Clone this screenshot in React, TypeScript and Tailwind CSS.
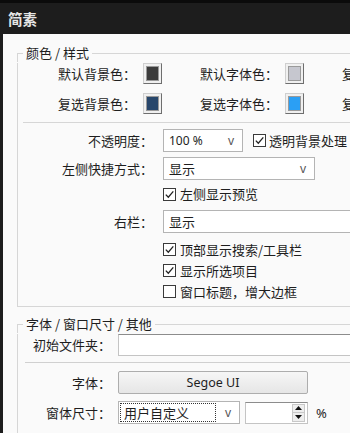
import React from 'react'

const CJK = "font-['Noto_Sans_CJK_SC',sans-serif]"
const LATIN = "font-['Noto_Sans','Open_Sans',sans-serif]"

// Group box that runs off the right edge of the window (no right border visible)
function Group({ title, className = '', bodyClass = '', children }: { title: string; className?: string; bodyClass?: string; children: React.ReactNode }) {
  return (
    <div className={`ml-[14px] w-[400px] min-w-[400px] ${className}`}>
      <div className="flex h-[18px]">
        <div className="h-[9px] w-[6px] self-end border-t border-l border-[#d6d6d6]" />
        <span className="px-[3px] whitespace-nowrap">{title}</span>
        <div className="h-[9px] flex-1 self-end border-t border-[#d6d6d6]" />
      </div>
      <div className={`border-l border-b border-[#d6d6d6] ${bodyClass}`}>{children}</div>
    </div>
  )
}

function Swatch({ color }: { color: string }) {
  return (
    <div className="ml-[7px] h-[21px] w-[19px] shrink-0 border border-[#cfcfcf] border-r-[#6e6e6e] border-b-[#6e6e6e] bg-[#f0f0f0] p-[2px]">
      <div className="h-full w-full border border-[#9a9a9a]" style={{ background: color }} />
    </div>
  )
}

function Check({ checked }: { checked: boolean }) {
  return (
    <div className="flex h-[13px] w-[13px] shrink-0 items-center justify-center border border-[#3a3a3a] bg-white">
      {checked && (
        <svg width="11" height="11" viewBox="0 0 11 11">
          <path d="M1.8 5.6 L4.3 8.2 L9.3 2.4" fill="none" stroke="#222" strokeWidth="1.3" />
        </svg>
      )}
    </div>
  )
}

function CheckRow({ label, checked, h = 'h-[21px]' }: { label: string; checked: boolean; h?: string }) {
  return (
    <div className={`flex ${h} items-center pl-[145px]`}>
      <Check checked={checked} />
      <span className="ml-[4px] whitespace-nowrap">{label}</span>
    </div>
  )
}

function Select({ value, width, arrow = true }: { value: string; width: string; arrow?: boolean }) {
  return (
    <div className={`flex h-[23px] ${width} shrink-0 items-center border border-[#b4b4b4] bg-white pl-[5px] pr-[8px]`}>
      <span className="flex-1 whitespace-nowrap">{value}</span>
      {arrow && <span className={`${LATIN} text-[12px] text-[#555]`}>v</span>}
    </div>
  )
}

function ColorRow({ a, ca, b, cb, c }: { a: string; ca: string; b: string; cb: string; c: string }) {
  return (
    <div className="flex h-[21px] items-center">
      <span className="w-[118px] shrink-0 text-right">{a}</span>
      <Swatch color={ca} />
      <span className="w-[116px] shrink-0 text-right">{b}</span>
      <Swatch color={cb} />
      <span className="ml-[38px] whitespace-nowrap">{c}</span>
    </div>
  )
}

function Row({ label, children, className = '' }: { label: string; children: React.ReactNode; className?: string }) {
  return (
    <div className={`flex items-center ${className}`}>
      <span className="w-[135px] shrink-0 text-right">{label}</span>
      <div className="ml-[10px] flex items-center">{children}</div>
    </div>
  )
}

function Row2({ label, children, className = '' }: { label: string; children: React.ReactNode; className?: string }) {
  return (
    <div className={`flex items-center ${className}`}>
      <span className="w-[93px] shrink-0 text-right">{label}</span>
      <div className="ml-[7px] flex items-center">{children}</div>
    </div>
  )
}

export default function App() {
  return (
    <div className={`flex h-[433px] w-[350px] flex-col overflow-hidden bg-[#1b1b1b] ${CJK} text-[13px] leading-[18px] text-[#1e1e1e]`}>
      {/* Title bar */}
      <div className="flex h-[34px] shrink-0 items-center border-t-[3px] border-[#0b0b0b] bg-[#1d1d1d] pl-[8px]">
        <span className="text-[14.5px] font-bold text-[#e6e6e6]">简素</span>
      </div>

      <div className="flex-1 overflow-hidden border-l-[3px] border-[#1d1d1d] bg-[#fafafa]">
        {/* Colour / style group */}
        <Group title="颜色 / 样式" className="mt-[10px]" bodyClass="pb-[4px]">
          <div className="mt-[1px]">
            <ColorRow a="默认背景色：" ca="#3b3b3b" b="默认字体色：" cb="#c6c7cf" c="复选框背景：" />
          </div>
          <div className="mt-[9px]">
            <ColorRow a="复选背景色：" ca="#27466b" b="复选字体色：" cb="#2b9ff4" c="复选框字体：" />
          </div>

          <div className="mt-[8px] ml-[5px] border-t border-[#d6d6d6]" />

          <Row label="不透明度：" className="mt-[6px] h-[23px]">
            <div className={LATIN + ' text-[12px]'}>
              <Select value="100 %" width="w-[80px]" />
            </div>
            <div className="ml-[10px] flex items-center">
              <Check checked />
              <span className="ml-[3px] whitespace-nowrap">透明背景处理</span>
            </div>
          </Row>

          <Row label="左侧快捷方式：" className="mt-[5px] h-[23px]">
            <Select value="显示" width="w-[152px]" />
          </Row>

          <div className="mt-[2px]">
            <CheckRow label="左侧显示预览" checked h="h-[24px]" />
          </div>

          <Row label="右栏：" className="mt-[4px] h-[23px]">
            <Select value="显示" width="w-[230px]" arrow={false} />
          </Row>

          <div className="mt-[6px]">
            <CheckRow label="顶部显示搜索/工具栏" checked />
            <CheckRow label="显示所选项目" checked />
            <CheckRow label="窗口标题，增大边框" checked={false} />
          </div>
        </Group>

        {/* Font / window size / other group */}
        <Group title="字体 / 窗口尺寸 / 其他" className="mt-[8px]" bodyClass="pb-[20px]">
          <Row2 label="初始文件夹：" className="mt-[1px] h-[22px]">
            <div className="h-[22px] w-[260px] border border-[#c4c4c4] border-t-[#8c8c8c] bg-white" />
          </Row2>

          <div className="mt-[6px] ml-[7px] border-t border-[#d0d0d0]" />

          <Row2 label="字体：" className="mt-[8px] h-[23px]">
            <div className={`flex h-[23px] w-[190px] items-center justify-center rounded-[2px] border border-[#adadad] bg-gradient-to-b from-[#f6f6f6] to-[#e6e6e6] ${LATIN} text-[12.5px]`}>
              Segoe UI
            </div>
          </Row2>

          <Row2 label="窗体尺寸：" className="mt-[7px] h-[23px]">
            <div className="flex h-[23px] w-[122px] items-center border border-[#b4b4b4] bg-white pr-[8px]">
              <div className="ml-[1px] flex h-[19px] w-[96px] items-center border border-dotted border-[#333] pl-[3px] whitespace-nowrap">
                用户自定义
              </div>
              <span className={`ml-auto ${LATIN} text-[12px] text-[#555]`}>v</span>
            </div>
            <div className="ml-[5px] flex h-[22px] w-[63px] items-center border border-[#c4c4c4] border-t-[#8c8c8c] bg-white pr-[2px]">
              <div className="ml-auto flex h-[18px] w-[13px] flex-col border border-[#c8c8c8] bg-[#eeeeee]">
                <div className="flex flex-1 items-center justify-center border-b border-[#c8c8c8]">
                  <svg width="7" height="4" viewBox="0 0 7 4"><path d="M3.5 0 L7 4 L0 4 Z" fill="#111" /></svg>
                </div>
                <div className="flex flex-1 items-center justify-center">
                  <svg width="7" height="4" viewBox="0 0 7 4"><path d="M0 0 L7 0 L3.5 4 Z" fill="#111" /></svg>
                </div>
              </div>
            </div>
            <span className={`ml-[8px] ${LATIN} text-[13px]`}>%</span>
          </Row2>
        </Group>
      </div>
    </div>
  )
}
